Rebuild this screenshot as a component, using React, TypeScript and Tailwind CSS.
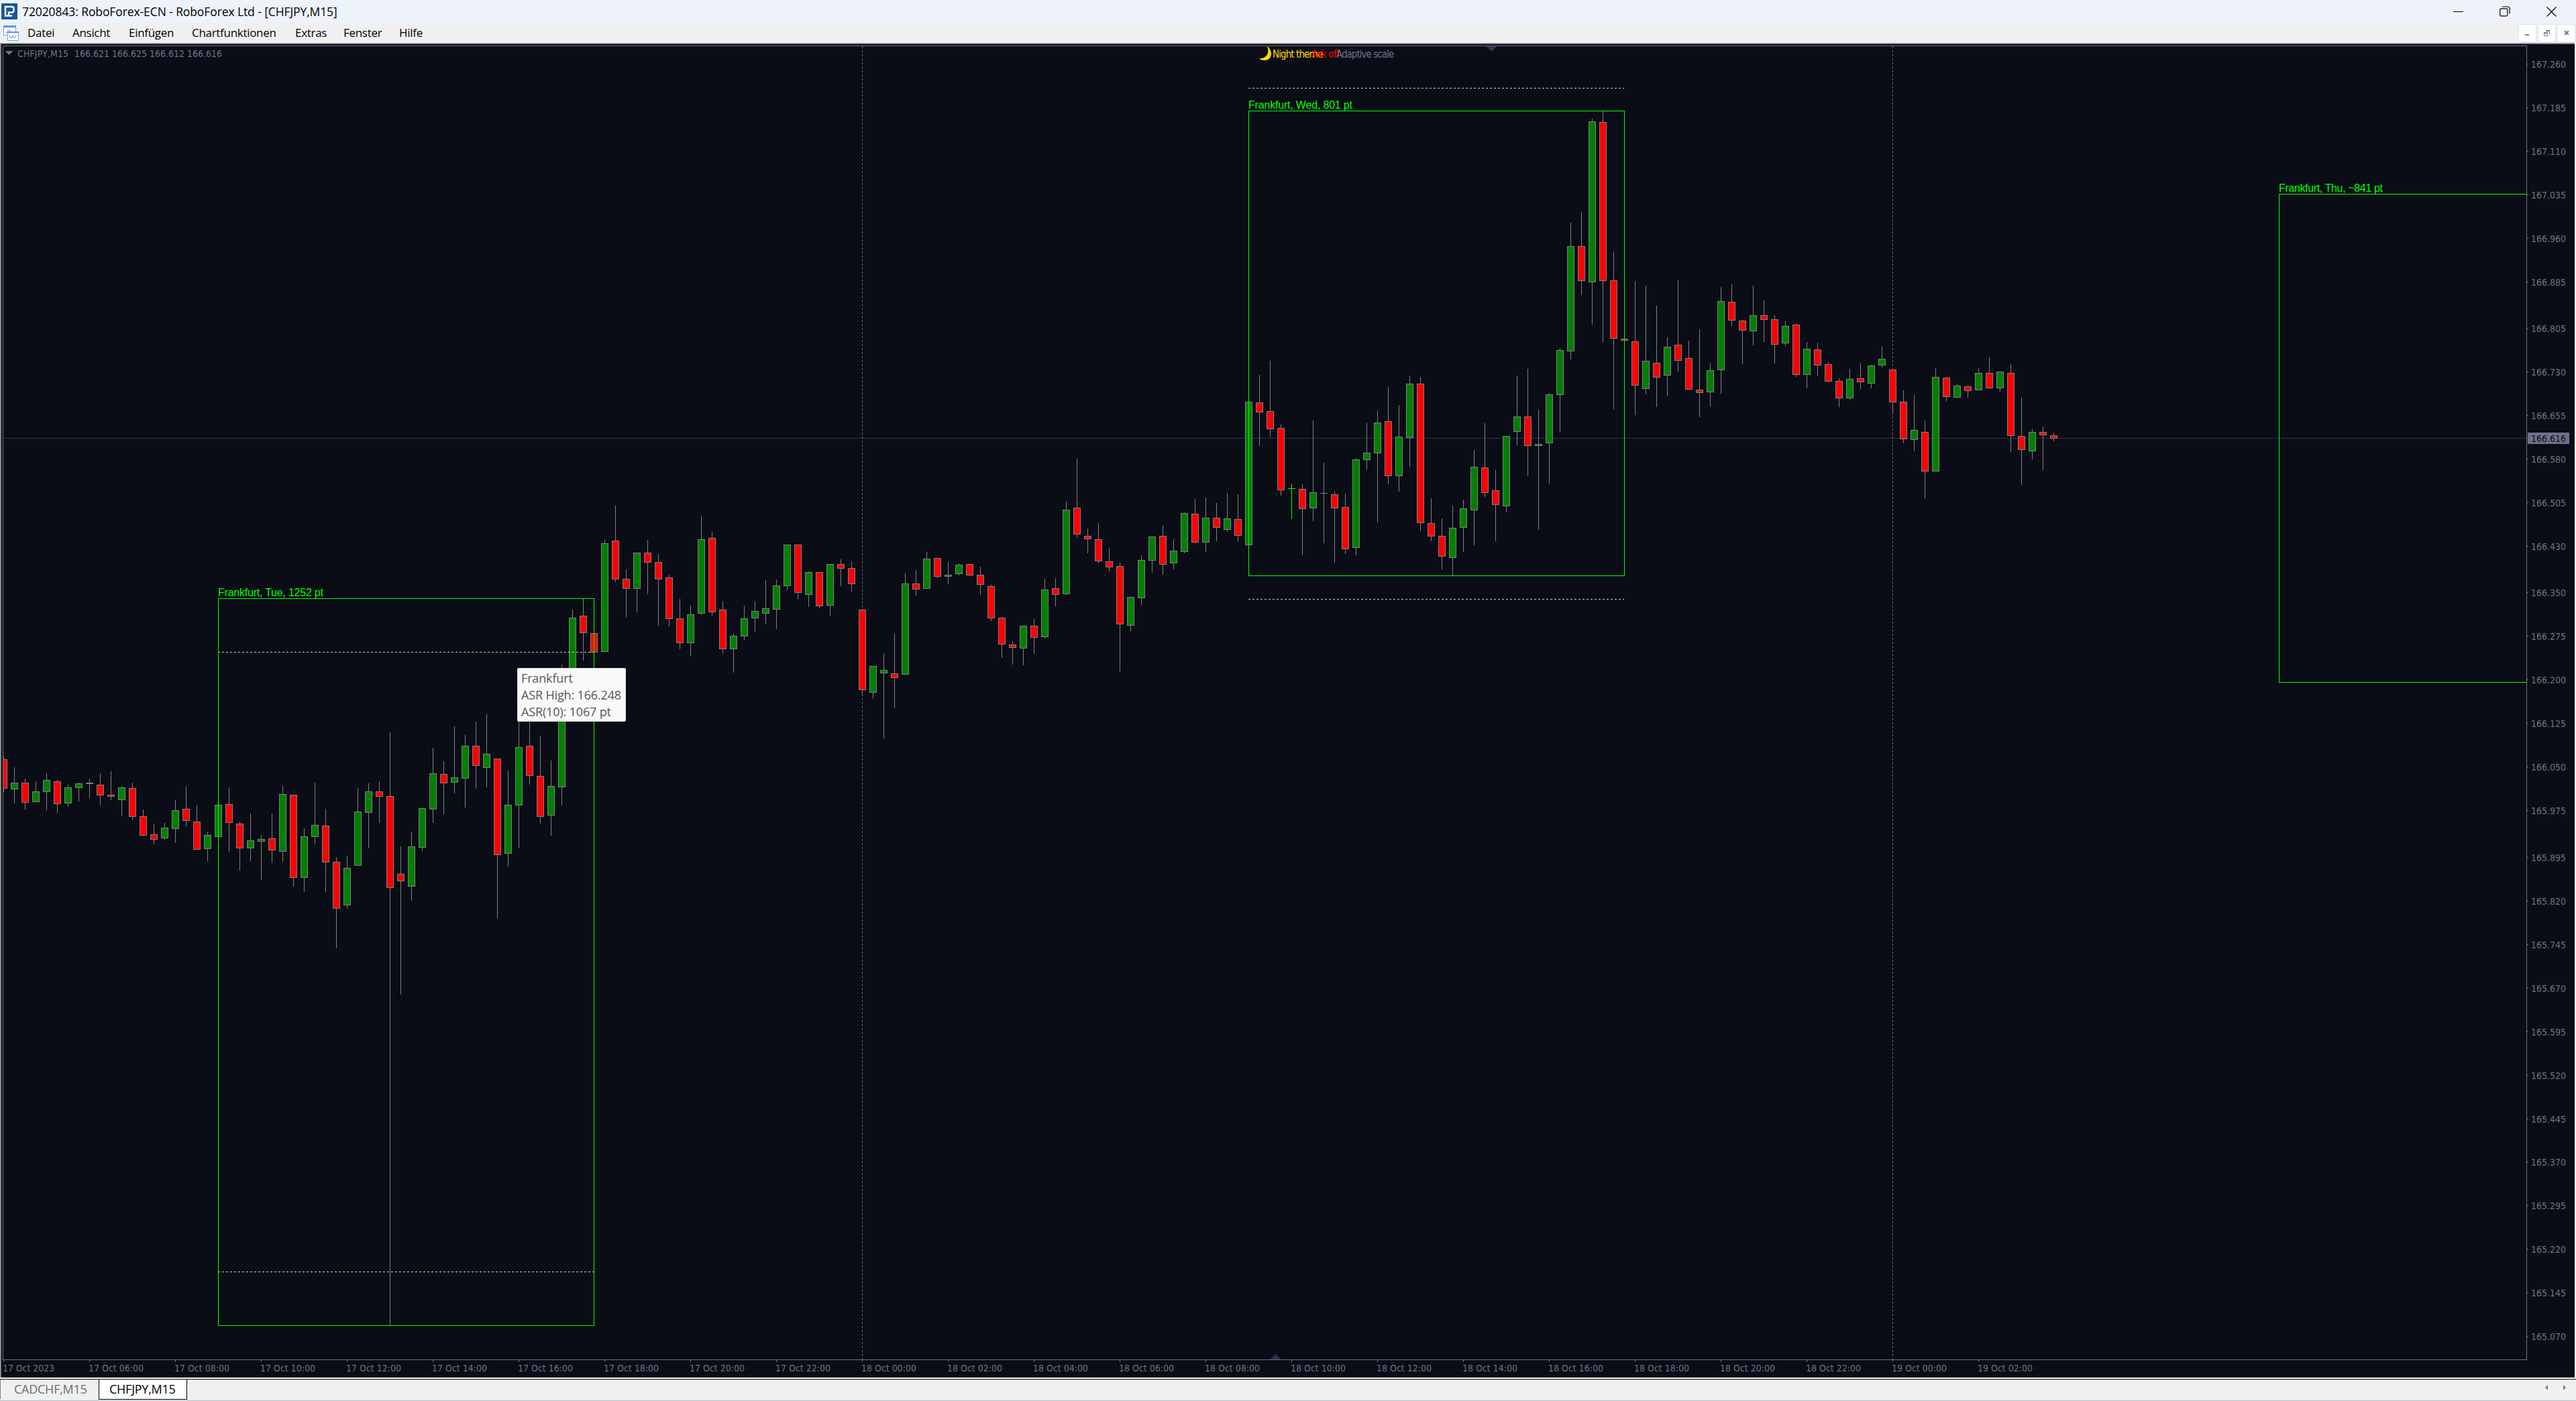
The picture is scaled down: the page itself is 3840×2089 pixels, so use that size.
import { Fragment } from 'react';

type Candle = [kind: 'u' | 'd' | 'n' | 'l', high: number, top: number, bottom: number, low: number];

// u = up, d = down, n = doji, l = lime doji
const candles: Candle[] = [
  ['d', 1128, 1132, 1176, 1181], ['u', 1144, 1167, 1177, 1198], ['d', 1161, 1167, 1197, 1207], ['u', 1165, 1180, 1196, 1196],
  ['u', 1153, 1163, 1181, 1208], ['d', 1163, 1165, 1199, 1212], ['u', 1170, 1174, 1198, 1203], ['u', 1167, 1168, 1175, 1195],
  ['n', 1161, 1167, 1169, 1190], ['d', 1153, 1170, 1186, 1201], ['d', 1150, 1185, 1188, 1193], ['u', 1172, 1174, 1193, 1217],
  ['d', 1167, 1175, 1218, 1223], ['d', 1207, 1217, 1246, 1247], ['d', 1228, 1244, 1252, 1259], ['u', 1227, 1234, 1250, 1252],
  ['u', 1193, 1208, 1236, 1257], ['d', 1173, 1206, 1224, 1233], ['d', 1200, 1225, 1267, 1267], ['u', 1240, 1245, 1266, 1284],
  ['u', 1200, 1200, 1248, 1248], ['d', 1174, 1199, 1227, 1270], ['d', 1225, 1228, 1265, 1298], ['u', 1213, 1253, 1265, 1284],
  ['u', 1245, 1251, 1255, 1312], ['d', 1213, 1250, 1268, 1286], ['u', 1172, 1184, 1270, 1285], ['d', 1185, 1185, 1309, 1322],
  ['u', 1235, 1247, 1309, 1330], ['u', 1167, 1230, 1248, 1259], ['d', 1206, 1231, 1286, 1330], ['d', 1278, 1285, 1355, 1414],
  ['u', 1276, 1294, 1350, 1355], ['u', 1175, 1210, 1291, 1291], ['u', 1168, 1180, 1212, 1265], ['d', 1165, 1180, 1188, 1227],
  ['d', 1092, 1187, 1324, 1976], ['d', 1262, 1303, 1314, 1483], ['u', 1240, 1262, 1322, 1343], ['u', 1204, 1205, 1264, 1269],
  ['u', 1115, 1153, 1207, 1227], ['d', 1135, 1154, 1168, 1214], ['u', 1083, 1159, 1167, 1183], ['u', 1096, 1112, 1161, 1204],
  ['d', 1076, 1112, 1142, 1176], ['u', 1065, 1124, 1145, 1174], ['d', 1131, 1131, 1275, 1369], ['u', 1149, 1200, 1273, 1292],
  ['u', 1040, 1114, 1201, 1265], ['d', 1050, 1112, 1157, 1170], ['d', 1097, 1157, 1218, 1228], ['u', 1134, 1172, 1216, 1246],
  ['u', 991, 1040, 1174, 1201], ['u', 909, 921, 1040, 1040], ['d', 893, 918, 944, 985], ['d', 944, 944, 973, 973],
  ['u', 804, 810, 972, 972], ['d', 754, 806, 864, 868], ['d', 849, 863, 878, 920], ['u', 824, 824, 878, 913],
  ['d', 805, 824, 839, 886], ['d', 826, 838, 864, 933], ['d', 857, 861, 923, 934], ['d', 893, 922, 959, 968],
  ['u', 903, 916, 959, 979], ['u', 769, 804, 915, 917], ['d', 793, 802, 913, 918], ['d', 896, 909, 968, 975],
  ['u', 945, 948, 968, 1003], ['u', 903, 922, 949, 954], ['u', 897, 911, 922, 942], ['u', 865, 907, 915, 931],
  ['u', 864, 873, 909, 938], ['u', 812, 812, 874, 880], ['d', 812, 812, 884, 894], ['u', 852, 853, 887, 905],
  ['d', 853, 853, 904, 907], ['u', 841, 841, 903, 918], ['d', 834, 841, 848, 874], ['d', 838, 847, 871, 882],
  ['d', 908, 909, 1029, 1037], ['u', 993, 993, 1033, 1042], ['u', 974, 999, 1004, 1102], ['d', 945, 1004, 1011, 1056],
  ['u', 855, 870, 1006, 1006], ['d', 850, 870, 879, 888], ['u', 823, 833, 878, 878], ['d', 832, 832, 860, 862],
  ['u', 838, 857, 860, 871], ['u', 840, 842, 856, 858], ['d', 840, 841, 858, 859], ['d', 845, 857, 872, 887],
  ['d', 872, 874, 922, 926], ['d', 920, 921, 961, 981], ['d', 956, 961, 966, 991], ['u', 933, 933, 967, 992],
  ['d', 923, 933, 951, 975], ['u', 863, 879, 950, 952], ['d', 862, 877, 887, 904], ['u', 747, 760, 886, 887],
  ['d', 684, 757, 797, 802], ['d', 788, 799, 804, 825], ['d', 780, 804, 837, 840], ['d', 818, 837, 846, 852],
  ['d', 839, 844, 931, 1001], ['u', 890, 890, 933, 941], ['u', 828, 835, 892, 902], ['u', 800, 800, 836, 854],
  ['d', 783, 799, 842, 857], ['u', 804, 821, 840, 849], ['u', 764, 765, 823, 825], ['d', 744, 766, 809, 810],
  ['u', 742, 772, 809, 823], ['d', 750, 772, 787, 807], ['u', 735, 773, 790, 793], ['d', 737, 774, 799, 808],
  ['u', 599, 599, 813, 813], ['d', 559, 600, 615, 665], ['d', 538, 613, 640, 652], ['d', 633, 638, 731, 739],
  ['l', 721, 728, 729, 774], ['d', 722, 729, 759, 828], ['u', 627, 734, 758, 777], ['n', 690, 735, 736, 810],
  ['d', 733, 737, 758, 839], ['d', 736, 756, 819, 826], ['u', 683, 685, 817, 828], ['u', 631, 675, 686, 700],
  ['u', 612, 630, 676, 779], ['d', 577, 628, 710, 722], ['u', 604, 651, 710, 733], ['u', 560, 572, 653, 696],
  ['d', 562, 572, 780, 792], ['d', 743, 780, 800, 807], ['d', 773, 799, 830, 849], ['u', 754, 787, 832, 858],
  ['u', 745, 758, 787, 823], ['u', 671, 696, 761, 813], ['d', 631, 697, 735, 741], ['d', 701, 731, 753, 807],
  ['u', 650, 650, 755, 764], ['u', 560, 621, 644, 664], ['d', 550, 621, 665, 710], ['u', 611, 662, 665, 790],
  ['u', 586, 588, 661, 721], ['u', 519, 522, 589, 645], ['u', 332, 367, 524, 536], ['d', 316, 367, 419, 440],
  ['u', 177, 181, 421, 484], ['d', 166, 182, 419, 510], ['d', 375, 418, 505, 610], ['d', 505, 505, 508, 508],
  ['d', 419, 509, 575, 619], ['u', 426, 538, 580, 588], ['d', 456, 541, 563, 607], ['u', 503, 517, 560, 591],
  ['d', 418, 514, 538, 555], ['d', 508, 534, 581, 581], ['d', 491, 581, 586, 622], ['u', 541, 552, 585, 606],
  ['u', 428, 449, 552, 587], ['d', 424, 450, 478, 486], ['d', 477, 478, 493, 543], ['u', 426, 470, 494, 515],
  ['d', 448, 470, 477, 510], ['d', 470, 476, 514, 542], ['u', 478, 486, 512, 516], ['d', 482, 484, 559, 562],
  ['u', 510, 520, 559, 579], ['d', 511, 521, 545, 560], ['d', 540, 543, 569, 570], ['d', 564, 568, 594, 607],
  ['u', 550, 565, 594, 596], ['d', 541, 564, 570, 581], ['u', 544, 545, 572, 579], ['u', 516, 535, 545, 548],
  ['d', 551, 551, 600, 616], ['d', 582, 599, 655, 661], ['u', 589, 641, 656, 673], ['d', 627, 644, 703, 744],
  ['u', 549, 562, 703, 703], ['d', 562, 563, 592, 598], ['u', 572, 575, 593, 593], ['d', 575, 576, 583, 593],
  ['u', 549, 556, 582, 582], ['d', 532, 556, 579, 579], ['u', 554, 554, 579, 584], ['d', 543, 556, 650, 674],
  ['d', 592, 650, 671, 723], ['u', 639, 644, 673, 685], ['d', 636, 644, 649, 701], ['d', 645, 649, 654, 658],
];

const prices = [
  167.26, 167.185, 167.11, 167.035, 166.96, 166.885, 166.805, 166.73, 166.655, 166.58, 166.505, 166.43, 166.35, 166.275,
  166.2, 166.125, 166.05, 165.975, 165.895, 165.82, 165.745, 165.67, 165.595, 165.52, 165.445, 165.37, 165.295, 165.22,
  165.145, 165.07,
];

const times = [
  '17 Oct 2023', '17 Oct 06:00', '17 Oct 08:00', '17 Oct 10:00', '17 Oct 12:00', '17 Oct 14:00', '17 Oct 16:00',
  '17 Oct 18:00', '17 Oct 20:00', '17 Oct 22:00', '18 Oct 00:00', '18 Oct 02:00', '18 Oct 04:00', '18 Oct 06:00',
  '18 Oct 08:00', '18 Oct 10:00', '18 Oct 12:00', '18 Oct 14:00', '18 Oct 16:00', '18 Oct 18:00', '18 Oct 20:00',
  '18 Oct 22:00', '19 Oct 00:00', '19 Oct 02:00',
];

const menu = [
  { label: 'Datei', w: 'w-[67px]' },
  { label: 'Ansicht', w: 'w-[84px]' },
  { label: 'Einfügen', w: 'w-[94px]' },
  { label: 'Chartfunktionen', w: 'w-[154px]' },
  { label: 'Extras', w: 'w-[72px]' },
  { label: 'Fenster', w: 'w-[83px]' },
  { label: 'Hilfe', w: 'w-[60px]' },
];

const FG = '#6e7189';
const priceY = (p: number) => Math.round(95 + (167.26 - p) * 866.4);

function CandleShape({ candle, x }: { candle: Candle; x: number }) {
  const [kind, high, top, bottom, low] = candle;
  const line = kind === 'l' ? '#00ff00' : '#808080';
  return (
    <>
      <rect x={x} y={high} width={1} height={low - high} fill={line} />
      <rect x={x - 5} y={top} width={11} height={bottom - top} fill={line} />
      {bottom - top > 2 && (
        <rect x={x - 4} y={top + 1} width={9} height={bottom - top - 2} fill={kind === 'u' ? '#008000' : '#ff0000'} />
      )}
    </>
  );
}

function SessionLabel({ x, y, width, children }: { x: number; y: number; width: number; children: string }) {
  return (
    <text x={x} y={y} textLength={width} className="font-['Liberation_Sans',sans-serif] text-[16px]" fill="#00ff00">
      {children}
    </text>
  );
}

function Chart() {
  return (
    <svg
      width={3836}
      height={1988}
      viewBox="2 66 3836 1988"
      className="block bg-[#0a0d16] font-['DejaVu_Sans_Condensed','DejaVu_Sans',sans-serif] text-[14px]"
      shapeRendering="crispEdges"
    >
      <clipPath id="plot">
        <rect x={5} y={69} width={3761} height={1958} />
      </clipPath>

      <g clipPath="url(#plot)">
        <path d="M5 653.5H3766" stroke="#2a3350" />
        <path d="M1285.5 69V2027M2821.5 69V2027" stroke={FG} strokeDasharray="3 3" />
        <path d="M2215 69h16l-8 8z" fill="#2a3350" />
        <path d="M1893 2027h16l-8 -8z" fill="#2a3350" />
        {candles.map((c, i) => (
          <CandleShape key={i} candle={c} x={5 + i * 16} />
        ))}

        {/* average session range */}
        <path
          d="M325 972.5H885M325 1896.5H885M1861 131.5H2421M1861 893.5H2421"
          stroke="#d3d3d3"
          strokeDasharray="3 3"
        />
        {/* sessions */}
        <g fill="none" stroke="#00ff00">
          <rect x={325.5} y={892.5} width={560} height={1084} />
          <rect x={1861.5} y={165.5} width={560} height={693} />
          <rect x={3397.5} y={289.5} width={400} height={728} />
        </g>
      </g>
      <SessionLabel x={325} y={889} width={157}>Frankfurt, Tue, 1252 pt</SessionLabel>
      <SessionLabel x={1861} y={162} width={155}>Frankfurt, Wed, 801 pt</SessionLabel>
      <SessionLabel x={3397} y={286} width={155}>Frankfurt, Thu, ~841 pt</SessionLabel>

      <rect x={4.5} y={68.5} width={3762} height={1959} fill="none" stroke={FG} />

      <g fill={FG}>
        {prices.map((p) => (
          <Fragment key={p}>
            <rect x={3767} y={priceY(p)} width={2} height={1} />
            <text x={3773} y={priceY(p) + 6} textLength={52}>{p.toFixed(3)}</text>
          </Fragment>
        ))}
        {times.map((t, i) => (
          <Fragment key={t}>
            <rect x={5 + i * 128} y={2028} width={1} height={3} />
            <text x={4 + i * 128} y={2045} textLength={i ? 82 : 77}>{t}</text>
          </Fragment>
        ))}
        <path d="M8 76h11l-5.5 6z" />
        <text x={26} y={85} textLength={76}>CHFJPY,M15</text>
        <text x={111} y={85} textLength={220}>166.621 166.625 166.612 166.616</text>
        <rect x={3768} y={645} width={62} height={17} />
      </g>
      <text x={3773} y={659} textLength={52} fill="#0a0d16">166.616</text>

      <path d="M1889 69c8 5 9 21 -4 21c-4 0 -7 -2 -8 -3c11 1 16 -8 12 -18z" fill="#ffd700" shapeRendering="auto" />
      <g className="text-[15px]">
        <text x={1897} y={86} textLength={75} fill="#ffd700">Night theme</text>
        <text x={1955} y={86} textLength={42} fill="#ff0000">Ask off</text>
        <text x={1992} y={86} textLength={86} fill={FG}>Adaptive scale</text>
      </g>
    </svg>
  );
}

function Tooltip() {
  return (
    <div className="absolute left-[771px] top-[996px] h-[80px] w-[162px] whitespace-nowrap rounded-[2px] border border-[#e5e5e5] bg-[#f9f9f9] pl-[5px] pt-[2px] font-['Open_Sans',sans-serif] text-[18px] leading-[25px] tracking-[-0.15px] text-[#575757]">
      <p>Frankfurt</p>
      <p>ASR High: 166.248</p>
      <p>ASR(10): 1067 pt</p>
    </div>
  );
}

export default function App() {
  return (
    <div className="relative flex h-[2089px] w-[3840px] flex-col overflow-hidden bg-[#f0f0f0] font-['Open_Sans','Noto_Sans',sans-serif] text-black">
      <header className="flex h-[34px] items-center justify-between bg-[#eef3fa] pl-[2px]">
        <div className="flex items-center gap-[7px]">
          <svg width="24" height="24" viewBox="0 0 24 24">
            <rect width="24" height="24" rx="1" fill="#1b5796" />
            <path d="M16 18.500H6V5h9.500q3 0 3 3v2.500q0 3 -3 3H11v4" fill="none" stroke="#fff" strokeWidth="2.400" />
          </svg>
          <h1 className="whitespace-nowrap text-[17.5px] tracking-[-0.1px]">72020843: RoboForex-ECN - RoboForex Ltd - [CHFJPY,M15]</h1>
        </div>
        <div className="flex items-center gap-[54px] pr-[29px]">
          <svg width="15" height="15" viewBox="0 0 15 15" shapeRendering="crispEdges">
            <path d="M0 7.500H15" stroke="#000" />
          </svg>
          <svg width="16" height="16" viewBox="0 0 16 16" fill="none" stroke="#000" strokeWidth="1.200">
            <rect x=".8" y="3.800" width="11" height="11" rx="1.500" />
            <path d="M4 1h8a3 3 0 0 1 3 3v7.500" />
          </svg>
          <svg width="15" height="15" viewBox="0 0 15 15" stroke="#000" strokeWidth="1.200">
            <path d="M.5 .5l14 14M14.500 .5l-14 14" />
          </svg>
        </div>
      </header>

      <nav className="flex h-[30px] items-center justify-between pl-[4px] pr-[1px]">
        <div className="flex items-center">
          <svg width="25" height="25" viewBox="0 0 25 25" shapeRendering="crispEdges">
            <rect x="1.500" y="1.500" width="18" height="14" fill="#fff" stroke="#6fa0f0" />
            <path d="M1 1h19v3H1z" fill="#5b93ee" />
            <path d="M4 11h3V8h3v3h4" fill="none" stroke="#6fa0f0" />
            <rect x="7.500" y="10.500" width="16" height="13" fill="#fff" stroke="#6fa0f0" />
            <path d="M7 10h17v2H7z" fill="#5b93ee" />
            <path d="M10 16l3 4 2 -4 3 4 2 -4" fill="none" stroke="#6fa0f0" />
          </svg>
          <ul className="ml-[12px] flex text-[17px] tracking-[-0.3px]">
            {menu.map((m) => (
              <li key={m.label} className={m.w}>{m.label}</li>
            ))}
          </ul>
        </div>
        <div className="flex gap-[2px]">
          <div className="flex h-[27px] w-[27px] items-center justify-center rounded-[2px] border border-[#e2e2e2] bg-white">
            <svg width="9" height="9" viewBox="0 0 9 9" shapeRendering="crispEdges">
              <path d="M1 6h6v2H1z" fill="#75808f" />
            </svg>
          </div>
          <div className="flex h-[27px] w-[27px] items-center justify-center rounded-[2px] border border-[#e2e2e2] bg-white">
            <svg width="9" height="9" viewBox="0 0 9 9" shapeRendering="crispEdges">
              <path d="M3 0h6v5H7V4h1V2H3zM0 3h6v6H0zM1 5v3h4V5z" fill="#75808f" fillRule="evenodd" />
            </svg>
          </div>
          <div className="flex h-[27px] w-[27px] items-center justify-center rounded-[2px] border border-[#e2e2e2] bg-white">
            <svg width="8" height="8" viewBox="0 0 8 8" stroke="#75808f" strokeWidth="2.200">
              <path d="M1 1l6 6M7 1l-6 6" />
            </svg>
          </div>
        </div>
      </nav>

      <main className="mr-[2px] border-l border-t border-[#a0a0a0]">
        <div className="border-l border-t border-[#696969]">
          <Chart />
        </div>
      </main>

      <footer className="flex h-[35px] flex-col border-t-2 border-white">
        <div className="flex h-[31px] items-start justify-between border-t border-black text-[18px] leading-[29px] tracking-[-0.25px]">
          <div className="flex">
            <span className="h-[29px] w-[147px] border-l border-[#808080] pl-[20px] text-[#6d6d6d]">CADCHF,M15</span>
            <span className="h-[30px] w-[132px] border-x border-b border-black bg-white pl-[15px]">CHFJPY,M15</span>
          </div>
          <svg width="50" height="28" viewBox="0 0 50 28" fill="#75808f">
            <path d="M8 8v8l-4 -4zM31 8v8l4 -4z" />
          </svg>
        </div>
        <div className="mt-[1px] h-[1px] bg-[#b8bfcc]" />
      </footer>

      <Tooltip />
    </div>
  );
}
